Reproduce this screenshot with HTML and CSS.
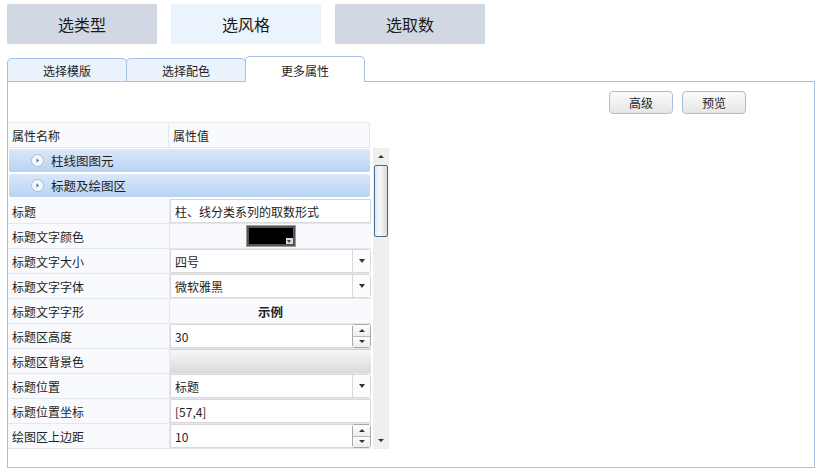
FILE: index.html
```html
<!DOCTYPE html>
<html>
<head>
<meta charset="utf-8">
<link rel="stylesheet" href="styles.css">
</head>
<body>
<div class="topbar">
  <div class="step">选类型</div>
  <div class="step active">选风格</div>
  <div class="step">选取数</div>
</div>
<div class="tabs">
  <div class="tab">选择模版</div>
  <div class="tab">选择配色</div>
  <div class="tab current">更多属性</div>
</div>
<div class="panel">
  <div class="actions">
    <div class="btn">高级</div>
    <div class="btn">预览</div>
  </div>
  <div class="grid">
    <div class="head">
      <div class="hcell name">属性名称</div>
      <div class="hcell val">属性值</div>
    </div>
    <div class="body">
      <div class="rows">
        <div class="cat"><span class="exp"><svg width="13" height="13" viewBox="0 0 13 13"><circle cx="6.5" cy="6.5" r="6" fill="#f4f8fd" stroke="#a3bcdc"/><path d="M5.5 4.5 L8 6.5 L5.5 8.5 Z" fill="#4a6a96"/></svg></span>柱线图图元</div>
        <div class="cat"><span class="exp"><svg width="13" height="13" viewBox="0 0 13 13"><circle cx="6.5" cy="6.5" r="6" fill="#f4f8fd" stroke="#a3bcdc"/><path d="M5.5 4.5 L8 6.5 L5.5 8.5 Z" fill="#4a6a96"/></svg></span>标题及绘图区</div>
        <div class="row"><div class="name">标题</div><div class="val"><div class="input">柱、线分类系列的取数形式</div></div></div>
        <div class="row"><div class="name">标题文字颜色</div><div class="val plain center"><div class="swatch"><span class="sarrow"></span></div></div></div>
        <div class="row"><div class="name">标题文字大小</div><div class="val"><div class="input combo"><span class="txt">四号</span><span class="drop"><i class="tri down"></i></span></div></div></div>
        <div class="row"><div class="name">标题文字字体</div><div class="val"><div class="input combo"><span class="txt">微软雅黑</span><span class="drop"><i class="tri down"></i></span></div></div></div>
        <div class="row"><div class="name">标题文字字形</div><div class="val plain center"><b class="sample">示例</b></div></div>
        <div class="row"><div class="name">标题区高度</div><div class="val"><div class="input combo"><span class="txt">30</span><span class="spin"><span class="sb"><i class="tri up"></i></span><span class="sb"><i class="tri down"></i></span></span></div></div></div>
        <div class="row"><div class="name">标题区背景色</div><div class="val"><div class="bgbox"></div></div></div>
        <div class="row"><div class="name">标题位置</div><div class="val"><div class="input combo"><span class="txt">标题</span><span class="drop"><i class="tri down"></i></span></div></div></div>
        <div class="row"><div class="name">标题位置坐标</div><div class="val"><div class="input">[57,4]</div></div></div>
        <div class="row"><div class="name">绘图区上边距</div><div class="val"><div class="input combo"><span class="txt">10</span><span class="spin"><span class="sb"><i class="tri up"></i></span><span class="sb"><i class="tri down"></i></span></span></div></div></div>
      </div>
      <div class="scroll">
        <div class="sarr"><i class="tri up small"></i></div>
        <div class="thumb"></div>
        <div class="track"></div>
        <div class="sarr"><i class="tri down small"></i></div>
      </div>
    </div>
  </div>
</div>
</body>
</html>
```
FILE: styles.css
```css
* { box-sizing: border-box; }
body {
  margin: 0;
  width: 821px;
  height: 474px;
  background: #ffffff;
  font-family: "Noto Sans CJK SC", "Noto Sans", sans-serif;
  font-size: 12px;
  color: #1e1e1e;
  overflow: hidden;
}
.topbar {
  display: flex;
  gap: 14px;
  padding: 4px 0 0 7px;
}
.step {
  width: 150px;
  height: 40px;
  background: #d1d8e4;
  display: flex;
  align-items: center;
  justify-content: center;
  font-size: 16px;
  color: #1a1a1a;
}
.step.active { background: #ebf3fc; }
.tabs {
  display: flex;
  align-items: flex-end;
  margin: 12px 0 0 7px;
  height: 25px;
}
.tab {
  width: 120px;
  height: 23px;
  border: 1px solid #a4c2e8;
  border-bottom: none;
  border-radius: 5px 5px 0 0;
  background: #eaf2fb;
  display: flex;
  align-items: center;
  justify-content: center;
  padding-top: 1px;
  margin-right: -1px;
}
.tab.current {
  background: #ffffff;
  position: relative;
  z-index: 2;
  margin-bottom: -1px;
  height: 26px;
}
.panel {
  margin-left: 7px;
  width: 808px;
  height: 387px;
  border: 1px solid #a4c2e8;
  position: relative;
  z-index: 1;
}
.actions {
  display: flex;
  justify-content: flex-end;
  gap: 9px;
  padding: 9px 68px 0 0;
}
.btn {
  width: 64px;
  height: 23px;
  border: 1px solid #a9bfda;
  border-radius: 4px;
  background: linear-gradient(#fbfbfb, #e6e6e6);
  display: flex;
  align-items: center;
  justify-content: center;
}
.grid {
  margin-top: 8px;
  width: 381px;
}
.head {
  display: flex;
  width: 362px;
  height: 26px;
  border-top: 1px solid #e6ebf2;
  border-bottom: 1px solid #e2e8f0;
  background: #f8fafd;
}
.hcell {
  display: flex;
  align-items: center;
  padding-left: 4px;
}
.head .name { width: 161px; border-right: 1px solid #e2e8f0; }
.head .val { width: 201px; border-right: 1px solid #e2e8f0; }
.body {
  display: flex;
}
.rows {
  width: 363px;
  padding-top: 1px;
}
.cat {
  height: 23px;
  margin: 0 0 2px 1px;
  width: 361px;
  border-radius: 2px;
  background: linear-gradient(#dbe7f9, #b9d3f3);
  display: flex;
  align-items: center;
  padding-left: 22px;
  font-size: 12.5px;
}
.exp { width: 13px; height: 13px; margin-right: 7px; display: flex; }
.row {
  display: flex;
  height: 25px;
  border-bottom: 1px solid #e3e8ef;
}
.row .name {
  width: 162px;
  background: #f8fafd;
  display: flex;
  align-items: center;
  padding-left: 4px;
  border-right: 1px solid #e3e8ef;
}
.row .val {
  width: 201px;
  display: flex;
  align-items: stretch;
}
.val.plain { background: #f8fafd; }
.val.center { justify-content: center; align-items: center; }
.input {
  flex: 1;
  background: #fff;
  border: 1px solid #d8d8d8;
  display: flex;
  align-items: center;
  padding-left: 4px;
}
.input.combo { padding-left: 0; border-radius: 0 3px 3px 0; }
.combo .txt { flex: 1; padding-left: 4px; }
.drop {
  width: 18px;
  align-self: stretch;
  border-left: 1px solid #d8d8d8;
  background: #fcfcfc;
  display: flex;
  align-items: center;
  justify-content: center;
}
.spin {
  width: 19px;
  align-self: stretch;
  display: flex;
  flex-direction: column;
  border: 1px solid #a8a8a8;
  border-radius: 3px;
  margin: -1px -1px -1px 0;
}
.sb {
  flex: 1;
  display: flex;
  align-items: center;
  justify-content: center;
  background: linear-gradient(#fdfdfd, #eeeeee);
}
.sb + .sb { border-top: 1px solid #b8b8b8; }
.tri {
  display: block;
  width: 0;
  height: 0;
  border-left: 3.5px solid transparent;
  border-right: 3.5px solid transparent;
}
.tri.down { border-top: 4px solid #333; }
.tri.up { border-bottom: 4px solid #333; }
.spin .tri { border-left-width: 3px; border-right-width: 3px; }
.spin .tri.up { border-bottom-width: 3px; }
.spin .tri.down { border-top-width: 3px; }
.swatch {
  width: 48px;
  height: 20px;
  background: #000;
  border: 2px solid #555;
  outline: 1px solid #9a9a9a;
  position: relative;
}
.sarrow {
  position: absolute;
  right: 0;
  bottom: 0;
  width: 7px;
  height: 6px;
  background: #d9d9d9;
}
.sarrow::after {
  content: "";
  position: absolute;
  left: 1px;
  top: 2px;
  border-left: 2.5px solid transparent;
  border-right: 2.5px solid transparent;
  border-top: 3px solid #444;
}
.sample { font-weight: bold; font-size: 12.5px; padding-top: 1px; }
.bgbox {
  flex: 1;
  background: linear-gradient(#f7f7f7, #dadada);
  border-top: 1px solid #cfcfcf;
}
.scroll {
  width: 18px;
  margin-left: 2px;
  background: #efefef;
  display: flex;
  flex-direction: column;
  align-items: center;
  height: 301px;
}
.sarr {
  height: 17px;
  display: flex;
  align-items: center;
  justify-content: center;
  width: 100%;
}
.tri.small { border-left-width: 3px; border-right-width: 3px; }
.tri.small.up { border-bottom-width: 3px; }
.tri.small.down { border-top-width: 3px; }
.thumb {
  width: 14px;
  height: 72px;
  border: 1px solid #3f6f9d;
  border-radius: 2px;
  background: linear-gradient(90deg, #e8e8e8, #fafafa 40%, #d8d8d8);
}
.track { flex: 1; }
```
